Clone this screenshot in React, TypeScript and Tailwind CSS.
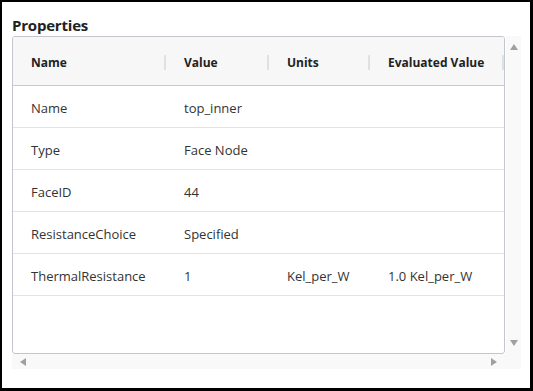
const rows = [
  { name: 'Name', value: 'top_inner', units: '', evaluated: '' },
  { name: 'Type', value: 'Face Node', units: '', evaluated: '' },
  { name: 'FaceID', value: '44', units: '', evaluated: '' },
  { name: 'ResistanceChoice', value: 'Specified', units: '', evaluated: '' },
  { name: 'ThermalResistance', value: '1', units: 'Kel_per_W', evaluated: '1.0 Kel_per_W' },
];

const cols = ['w-[153px]', 'w-[103px]', 'w-[101px]', 'w-[134px]'];

const Arrow = ({ dir }: { dir: 'up' | 'down' | 'left' | 'right' }) => {
  const points = {
    up: '0,6 4,0 8,6',
    down: '0,0 8,0 4,6',
    left: '6,0 6,8 0,4',
    right: '0,0 6,4 0,8',
  }[dir];
  const vertical = dir === 'up' || dir === 'down';
  return (
    <svg width={vertical ? 8 : 6} height={vertical ? 6 : 8} viewBox={vertical ? '0 0 8 6' : '0 0 6 8'}>
      <polygon points={points} fill="#a0a0a0" />
    </svg>
  );
};

const App = () => {
  return (
    <div
      className="w-[533px] h-[391px] bg-white border-black border-l-2 border-t-2 border-r-[3px] border-b-[3px] pl-[10px] text-[#333]"
      style={{ fontFamily: '"Open Sans", "Noto Sans", sans-serif' }}
    >
      <h1 className="mt-[12px] h-[22px] text-[15px] leading-[22px] font-bold text-[#222] tracking-[-0.2px]">Properties</h1>

      <div className="w-[509px]">
        <div className="flex">
          {/* Table */}
          <div className="w-[494px] h-[318px] border border-[#c3c6cc] rounded-[3px] overflow-hidden">
            <div className="flex h-[49px] bg-[#f7f7f8] border-b border-[#c8cad0] items-center">
              {['Name', 'Value', 'Units', 'Evaluated Value'].map((h, i) => (
                <div key={h} className={`${cols[i]} flex items-center h-full pt-[2px]`}>
                  <span className="flex-1 pl-[18px] pt-[2px] text-[12px] font-bold text-[#222]">{h}</span>
                  <span className="w-[2px] h-[15px] bg-[#dde1e8]" />
                </div>
              ))}
            </div>
            {rows.map((r) => (
              <div key={r.name} className="flex h-[42px] items-center pt-[4px] border-b border-[#e2e3e8] text-[13px]">
                <div className={`${cols[0]} pl-[18px]`}>{r.name}</div>
                <div className={`${cols[1]} pl-[18px]`}>{r.value}</div>
                <div className={`${cols[2]} pl-[18px]`}>{r.units}</div>
                <div className={`${cols[3]} pl-[18px]`}>{r.evaluated}</div>
              </div>
            ))}
          </div>

          {/* Vertical scrollbar */}
          <div className="w-[15px] h-[318px] ml-[1px] bg-[#f9f9f9] flex flex-col items-center justify-between py-[8px]">
            <Arrow dir="up" />
            <Arrow dir="down" />
          </div>
        </div>

        {/* Horizontal scrollbar */}
        <div className="h-[15px] bg-[#f9f9f9] flex items-center justify-between pl-[8px] pr-[24px]">
          <Arrow dir="left" />
          <Arrow dir="right" />
        </div>
      </div>
    </div>
  );
};

export default App;
